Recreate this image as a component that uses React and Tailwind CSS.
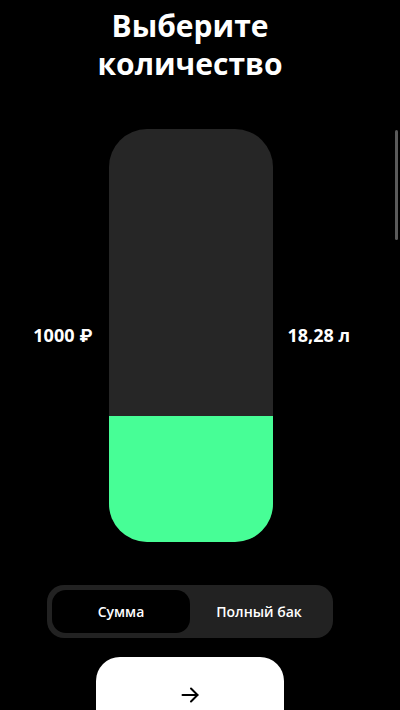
import { useState } from "react";

const FONT = { fontFamily: "'Open Sans', Inter, sans-serif" };

// Vertical fuel slider: dark track, green fill from the bottom
function FuelSlider({ level }) {
  return (
    <div className="w-[164px] h-[413px] rounded-[38px] bg-[#262626] overflow-hidden flex flex-col justify-end">
      <div className="w-full bg-[#47fe96]" style={{ height: `${level * 100}%` }} />
    </div>
  );
}

export default function App() {
  const [mode, setMode] = useState("sum");

  return (
    <div className="relative h-[710px] w-[400px] overflow-hidden bg-black text-white" style={FONT}>
      <div className="w-[380px] flex flex-col items-center pt-[7px]">
        <h1 className="text-[30px] leading-[38px] font-bold text-center">
          Выберите
          <br />
          количество
        </h1>

        <div className="mt-[46px] w-full flex items-center">
          <div className="flex-1 flex justify-end pr-4">
            <span className="text-[18px] font-bold">1000 ₽</span>
          </div>
          <FuelSlider level={0.304} />
          <div className="flex-1 flex justify-start pl-[15px]">
            <span className="text-[18px] font-bold">18,28 л</span>
          </div>
        </div>

        <div className="mt-[43px] w-[286px] h-[53px] rounded-[17px] bg-[#222222] p-[5px] flex">
          {[
            { id: "sum", label: "Сумма" },
            { id: "full", label: "Полный бак" },
          ].map((t) => (
            <button
              key={t.id}
              onClick={() => setMode(t.id)}
              className={`flex-1 rounded-[14px] text-[14px] font-semibold flex items-center justify-center ${
                mode === t.id ? "bg-black" : ""
              }`}
            >
              {t.label}
            </button>
          ))}
        </div>

        <button className="mt-[19px] w-[188px] h-[76px] rounded-[24px] bg-white flex items-center justify-center text-black">
          <svg width="18" height="16" viewBox="0 0 18 16" fill="none" stroke="currentColor" strokeWidth="2" strokeLinecap="round" strokeLinejoin="round">
            <path d="M1.5 8h15" />
            <path d="M10 1.5 16.5 8 10 14.5" />
          </svg>
        </button>
      </div>

      {/* scroll indicator */}
      <div className="absolute left-[395px] top-[130px] w-[3px] h-[110px] rounded-full bg-[#5a5a5a]" />
    </div>
  );
}
